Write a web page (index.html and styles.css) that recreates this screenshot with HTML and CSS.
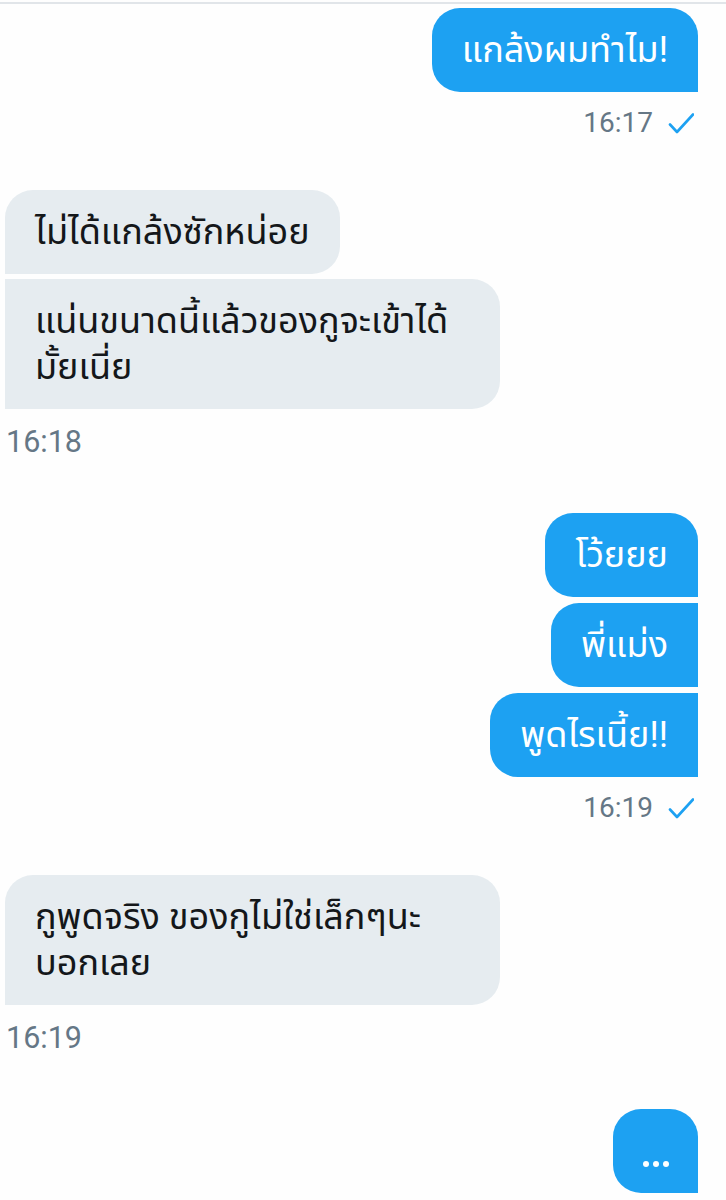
FILE: index.html
```html
<!doctype html>
<html>
<head>
	<meta charset="utf-8">
	<meta name="viewport" content="width=device-width, initial-scale=1.0">
	<title>ข้อความ</title>
	<link rel="stylesheet" href="styles.css">
</head>
<body>
	<div class="topline"></div>
	<div class="chat">

		<div class="group out">
			<div class="bubble">แกล้งผมทำไม!</div>
			<div class="meta">
				<span class="time">16:17</span>
				<svg class="check" width="26" height="22" viewBox="0 0 26 22"><path d="M2 11.5 L9 19 L25 1.5" fill="none" stroke="#1da1f2" stroke-width="2.6" stroke-linecap="round" stroke-linejoin="round"/></svg>
			</div>
		</div>

		<div class="group in">
			<div class="bubble">ไม่ได้แกล้งซักหน่อย</div>
			<div class="bubble">แน่นขนาดนี้แล้วของกูจะเข้าได้มั้ยเนี่ย</div>
			<div class="meta">
				<span class="time">16:18</span>
			</div>
		</div>

		<div class="group out">
			<div class="bubble">โว้ยยย</div>
			<div class="bubble">พี่แม่ง</div>
			<div class="bubble">พูดไรเนี้ย!!</div>
			<div class="meta">
				<span class="time">16:19</span>
				<svg class="check" width="26" height="22" viewBox="0 0 26 22"><path d="M2 11.5 L9 19 L25 1.5" fill="none" stroke="#1da1f2" stroke-width="2.6" stroke-linecap="round" stroke-linejoin="round"/></svg>
			</div>
		</div>

		<div class="group in">
			<div class="bubble">กูพูดจริง ของกูไม่ใช่เล็กๆนะบอกเลย</div>
			<div class="meta">
				<span class="time">16:19</span>
			</div>
		</div>

		<div class="group out">
			<div class="bubble typing">
				<span class="dot"></span><span class="dot"></span><span class="dot"></span>
			</div>
		</div>

	</div>
</body>
</html>
```

FILE: styles.css
```css
	body {
		margin: 0;
		background: #fefefe;
		font-family: "Roboto", "Noto Sans Thai", "Noto Sans", sans-serif;
		color: #14171a;
	}
	.topline {
		height: 2px;
		margin-top: 2px;
		background: #e1e5e9;
	}
	.chat {
		display: flex;
		flex-direction: column;
		padding: 4px 28px 0 5px;
	}
	.group {
		display: flex;
		flex-direction: column;
	}
	.group.out {
		align-items: flex-end;
		gap: 6px;
		margin-bottom: 47px;
	}
	.group.in {
		align-items: flex-start;
		gap: 5px;
		margin-bottom: 51px;
	}
	.bubble {
		max-width: 435px;
		padding: 19px 30px;
		font-size: 36px;
		line-height: 46px;
	}
	.out .bubble {
		background: #1da1f2;
		color: #fff;
		border-radius: 28px 0 0 28px;
	}
	.in .bubble {
		background: #e6ecf0;
		border-radius: 0 28px 28px 0;
	}
	.out .bubble:first-child {
		border-radius: 28px 28px 0 28px;
	}
	.in .bubble:first-child {
		border-radius: 28px 28px 28px 0;
	}
	.meta {
		display: flex;
		align-items: center;
		height: 40px;
		line-height: 40px;
		color: #657786;
	}
	.group .meta {
		margin-top: 5px;
	}
	.out .meta {
		padding-right: 4px;
		font-size: 28px;
	}
	.in .meta {
		padding-left: 1px;
		font-size: 30.5px;
	}
	.out .meta {
		margin-top: 5px;
	}
	.in .meta {
		margin-top: 8px;
	}
	.check {
		margin-left: 15px;
		margin-top: 2px;
	}
	.bubble.typing {
		width: 85px;
		height: 84px;
		padding: 0 0 26px;
		box-sizing: border-box;
		display: flex;
		align-items: flex-end;
		justify-content: center;
		gap: 4px;
	}
	.dot {
		width: 6px;
		height: 6px;
		border-radius: 50%;
		background: #fff;
	}
```
